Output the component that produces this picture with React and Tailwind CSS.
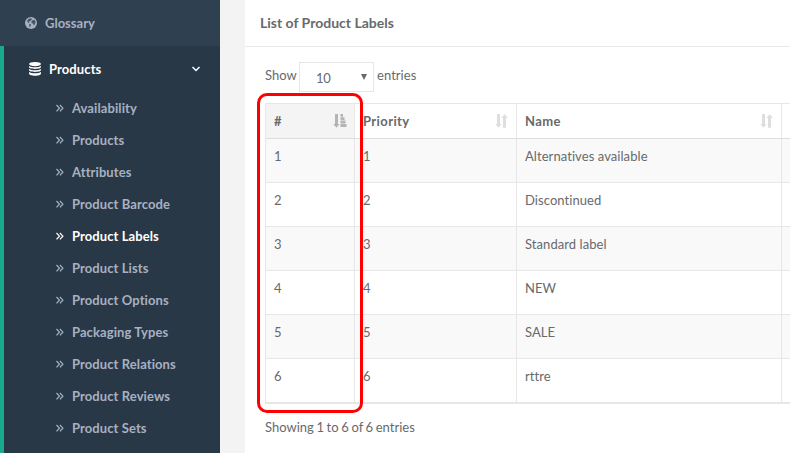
import React from "react";

const links = [
  "Availability", "Products", "Attributes", "Product Barcode", "Product Labels", "Product Lists",
  "Product Options", "Packaging Types", "Product Relations", "Product Reviews", "Product Sets",
];
const names = ["Alternatives available", "Discontinued", "Standard label", "NEW", "SALE", "rttre"];

function Globe() {
  return (
    <svg className="h-3 w-3 shrink-0" viewBox="0 0 12 12">
      <circle cx="6" cy="6" r="6" fill="currentColor" />
      <path d="M4.6 1.6 6.4 1.2 7 2.2 5.8 3.4 4.8 4.4 3.4 4.8 4.4 6 3.6 6.2 2.2 4.6 2.8 2.6ZM7.6 3.2 9.6 2.8 10.6 5 9.8 7.6 8.8 8.4 8 6.6 6.6 6.2 6.4 4.6ZM4.4 6.8 6.2 7.6 5.6 9 4.8 10.4 4.2 8.8Z" fill="#2f4050" fillOpacity="0.8" />
    </svg>
  );
}

function Database() {
  return (
    <svg className="h-[14px] w-3 shrink-0" viewBox="0 0 12 14" fill="currentColor">
      <ellipse cx="6" cy="2.1" rx="6" ry="2.1" />
      <path d="M0 3.9C2 5.6 10 5.6 12 3.9V5.1c0 2.5-12 2.5-12 0Z" />
      <path d="M0 6.9C2 8.6 10 8.6 12 6.9V8.1c0 2.5-12 2.5-12 0Z" />
      <path d="M0 9.9C2 11.6 10 11.6 12 9.9V11.6c0 3-12 3-12 0Z" />
    </svg>
  );
}

function DoubleAngle() {
  return (
    <svg className="h-2 w-2 shrink-0" viewBox="0 0 8 8" fill="none" stroke="currentColor" strokeWidth="1.2">
      <path d="M.5 1 3.5 4.2 .5 7.4M3.9 1 6.9 4.2 3.9 7.4" />
    </svg>
  );
}

function SortBoth() {
  return (
    <svg className="h-[14px] w-[13px] text-[#dedede]" viewBox="0 0 13 14" fill="currentColor">
      <path d="M2 0h3v10h1.6L3.5 13.7.2 10H2Z" />
      <path d="M8 13.7h3V4h1.9L9.6.2 6.3 4H8Z" />
    </svg>
  );
}

function SortAscending() {
  return (
    <svg className="h-[14px] w-[14px] text-[#b4b4b4]" viewBox="0 0 14 14" fill="currentColor">
      <path d="M2 0h3v10h1.6L3.5 13.7.2 10H2Z" />
      <path d="M7.5 0h2.5v2.8H7.5ZM7.5 3.3h4v2.8H7.5ZM7.5 6.6h5v2.9H7.5ZM7.5 10h6v3H7.5Z" />
    </svg>
  );
}

function HeaderCell({ label, active }) {
  return (
    <div className={`flex items-center justify-between border-r border-[#e7e7e7] pl-2 font-bold ${active ? "bg-[#f4f4f4] pr-[7px]" : "pr-2"}`}>
      <span className="tracking-[0.4px]">{label}</span>
      {label && <span className="-mt-px">{active ? <SortAscending /> : <SortBoth />}</span>}
    </div>
  );
}

export default function App() {
  return (
    <div className="flex h-[453px] w-[790px] overflow-hidden bg-[#f3f3f4] font-['Lato',sans-serif] text-[13px] leading-[18px] text-[#676a6c] [font-variant-ligatures:none]">
      <nav className="flex w-[220px] shrink-0 flex-col bg-[#2f4050] font-bold text-[#a7b1c2]">
        <div className="flex h-[46px] shrink-0 items-center pl-[25px]">
          <Globe />
          <span className="ml-2">Glossary</span>
        </div>
        <div className="flex-1 border-l-4 border-[#19aa8d] bg-[#293846]">
          <div className="flex h-[46px] items-center pl-[25px] pr-5 text-white">
            <Database />
            <span className="ml-2 tracking-[0.1px]">Products</span>
            <svg className="ml-auto h-2 w-2" viewBox="0 0 8 8" fill="none" stroke="currentColor" strokeWidth="1.5">
              <path d="M.5 2 4 5.5 7.5 2" />
            </svg>
          </div>
          {links.map((label) => (
            <div key={label} className={`flex h-8 items-center pl-[52px] ${label === "Product Labels" ? "text-white" : ""}`}>
              <DoubleAngle />
              <span className="ml-2 tracking-[0.09px]">{label}</span>
            </div>
          ))}
        </div>
      </nav>
      <main className="ml-[25px] flex-1 overflow-hidden bg-white">
        <h5 className="flex h-[47px] items-center border-b border-[#e7eaec] pl-[15px] text-[14px] font-bold">
          List of Product Labels
        </h5>
        <div className="pl-5 pt-[15px]">
          <div className="flex h-[30px]">
            <span className="w-[31px] pt-1">Show</span>
            <div className="ml-[3px] flex h-[30px] w-[75px] items-center border border-[#e5e6e7] pl-4 pr-[6px]">
              <span className="pt-0.5 tracking-[-0.4px]">10</span>
              <svg className="ml-auto h-[6px] w-[6px]" viewBox="0 0 6 6" fill="currentColor"><path d="M0 0h6L3 6Z" /></svg>
            </div>
            <span className="ml-[3px] pt-1 tracking-[0.05px]">entries</span>
          </div>
          <div className="relative mt-[11px] w-[640px] border-b border-l border-t border-[#e7e7e7]">
            <div className="grid h-[34px] grid-cols-[89px_162px_265px_124px]">
              <HeaderCell label="#" active />
              <HeaderCell label="Priority" />
              <HeaderCell label="Name" />
              <HeaderCell label="" />
            </div>
            {names.map((name, i) => (
              <div key={name} className={`grid h-11 grid-cols-[89px_162px_265px_124px] border-t ${i === 0 ? "border-[#dddddd]" : "border-[#e7e7e7]"} ${i % 2 === 0 ? "bg-[#f9f9f9]" : ""}`}>
                <div className="border-r border-[#e7e7e7] pl-2 pt-2">{i + 1}</div>
                <div className="border-r border-[#e7e7e7] pl-2 pt-2">{i + 1}</div>
                <div className="border-r border-[#e7e7e7] pl-2 pt-2 tracking-[0.07px]">{name}</div>
                <div />
              </div>
            ))}
            <div className="h-px bg-[#e7e7e7]" />
            <div className="absolute -left-[9px] -top-[11px] h-[320px] w-[106px] rounded-[10px] border-[3px] border-[#ff0000]" />
          </div>
          <p className="mt-[14px] [word-spacing:-0.7px]">Showing 1 to 6 of 6 entries</p>
        </div>
      </main>
    </div>
  );
}
